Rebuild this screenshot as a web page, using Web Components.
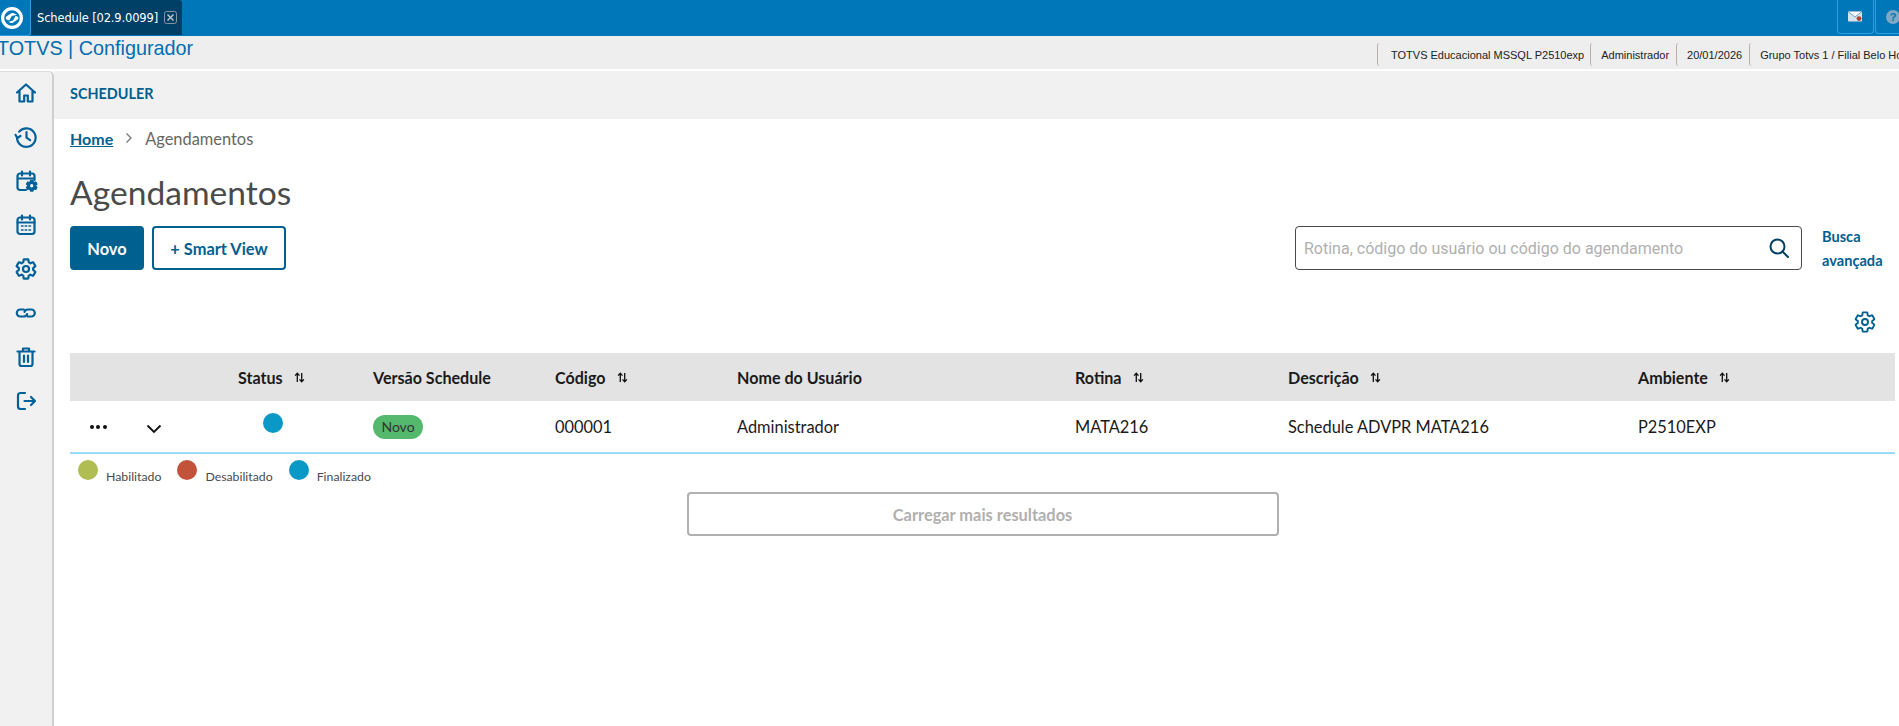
<!DOCTYPE html>
<html lang="pt-BR">
<head>
<meta charset="utf-8">
<title>Schedule</title>
<style>
  html, body { margin: 0; height: 100%; overflow: hidden; background: #fff; }
  body { display: flex; flex-direction: column; font-family: "Lato", "Liberation Sans", sans-serif; }
  .work { display: flex; flex: 1; min-height: 0; }
  .content { display: flex; flex-direction: column; flex: 1; min-width: 0; }
</style>
</head>
<body>
  <app-topbar></app-topbar>
  <app-infobar>
    <info-cell>TOTVS Educacional MSSQL P2510exp</info-cell>
    <info-cell>Administrador</info-cell>
    <info-cell>20/01/2026</info-cell>
    <info-cell>Grupo Totvs 1 / Filial Belo Ho</info-cell>
  </app-infobar>
  <div class="work">
    <app-sidebar></app-sidebar>
    <div class="content">
      <app-header>SCHEDULER</app-header>
      <bread-crumb></bread-crumb>
      <page-title>Agendamentos</page-title>
      <page-toolbar></page-toolbar>
      <data-table></data-table>
      <status-legend></status-legend>
      <load-more>Carregar mais resultados</load-more>
    </div>
  </div>

<script>
const GEAR = 'M19.14 12.94c.04-.3.06-.61.06-.94 0-.32-.02-.64-.07-.94l2.03-1.58c.18-.14.23-.41.12-.61l-1.92-3.32c-.12-.22-.37-.29-.59-.22l-2.39.96c-.5-.38-1.03-.7-1.62-.94l-.36-2.54c-.04-.24-.24-.41-.48-.41h-3.84c-.24 0-.43.17-.47.41l-.36 2.54c-.59.24-1.13.57-1.62.94l-2.39-.96c-.22-.08-.47 0-.59.22L2.74 8.87c-.12.21-.08.47.12.61l2.03 1.58c-.05.3-.09.63-.09.94s.02.64.07.94l-2.03 1.58c-.18.14-.23.41-.12.61l1.92 3.32c.12.22.37.29.59.22l2.39-.96c.5.38 1.03.7 1.62.94l.36 2.54c.05.24.24.41.48.41h3.84c.24 0 .44-.17.47-.41l.36-2.54c.59-.24 1.13-.56 1.62-.94l2.39.96c.22.08.47 0 .59-.22l1.92-3.32c.12-.22.07-.47-.12-.61l-2.01-1.58z';

class AppTopbar extends HTMLElement {
    connectedCallback() {
        this.attachShadow({ mode: "open" }).innerHTML = `
        <style>
            :host { display: flex; height: 36px; background: #0077b8; flex: none; overflow: hidden; }
            .logo { width: 30px; height: 35px; border-right: 1px solid #2f9de0; border-bottom: 1px solid #2f9de0; border-radius: 0 0 4px 0; display: flex; align-items: center; justify-content: flex-end; overflow: hidden; }
            .logo svg { flex: none; margin-right: 7px; }
            .tab { width: 151px; height: 35px; box-sizing: border-box; background: #003f66; border-radius: 0 3px 0 0; color: #fff; display: flex; align-items: center; padding-left: 6px; gap: 6px; font: 11.5px "DejaVu Sans", sans-serif; white-space: nowrap; }
            .tab b { font-weight: 400; letter-spacing: -.15px; }
            .spacer { flex: 1; }
            .btn { width: 37px; height: 34px; box-sizing: border-box; border: 1px solid #2f9de0; border-top: 0; border-radius: 0 0 4px 4px; display: flex; align-items: center; justify-content: center; flex: none; }
            .btn.help { width: 24px; justify-content: flex-start; padding-left: 10px; margin-left: 1px; border-right: 0; border-radius: 0 0 0 4px; overflow: hidden; }
            .btn.help svg { flex: none; }
        </style>
        <div class="logo">
            <svg width="22" height="22" viewBox="0 0 22 22">
                <circle cx="11" cy="11" r="9.4" fill="none" stroke="#fff" stroke-width="3.2"/>
                <path d="M5.4 9.4 9.8 6.5c.9-.6 1.9-.7 2.8-.3l3.4 1.5-5.2 1.2-2.6 4.7-2.7-1.2c-1-.6-1-2.2-.1-2.9z" fill="#fff"/>
                <path d="M16.6 12.6 12.2 15.5c-.9.6-1.9.7-2.8.3l-2-.9 4.6-1.5 2.6-4.7 2.1 1c1 .6 1 2.2-.1 2.9z" fill="#fff"/>
            </svg>
        </div>
        <div class="tab">
            <b>Schedule [02.9.0099]</b>
            <svg width="13" height="13" viewBox="0 0 13 13"><rect x=".5" y=".5" width="12" height="12" rx="2" fill="none" stroke="#8296a8"/><path d="M3.5 3.5l6 6M9.5 3.5l-6 6" stroke="#b8c4ce" stroke-width="1.5"/></svg>
        </div>
        <div class="spacer"></div>
        <div class="btn">
            <svg width="15" height="11" viewBox="0 0 15 11"><rect width="14" height="10" y=".5" rx="1" fill="#d5e5f0"/><path d="M.3.8 7 6 13.7.8" fill="#fff" stroke="#5d9cc6" stroke-width=".9"/><circle cx="11" cy="7.6" r="2.4" fill="#b5442b"/></svg>
        </div>
        <div class="btn help">
            <svg width="14" height="14" viewBox="0 0 14 14"><circle cx="7" cy="7" r="7" fill="#7fa9c4"/><text x="7" y="11" text-anchor="middle" font-family="Liberation Sans" font-size="11" font-weight="700" fill="#0077b8">?</text></svg>
        </div>`;
    }
}

class AppInfobar extends HTMLElement {
    connectedCallback() {
        this.attachShadow({ mode: "open" }).innerHTML = `
        <style>
            :host { display: flex; align-items: center; height: 33px; background: #eee; flex: none; overflow: hidden; margin-bottom: 2px; font-family: "Liberation Sans", Arial, sans-serif; white-space: nowrap; }
            .brand { font-size: 19.8px; color: #006eb0; margin-left: -3px; margin-top: -9px; flex: none; }
            .cells { margin-left: auto; display: flex; flex: none; width: 522px; }
        </style>
        <div class="brand">TOTVS | Configurador</div>
        <div class="cells"><slot></slot></div>`;
    }
}

class InfoCell extends HTMLElement {
    connectedCallback() {
        this.attachShadow({ mode: "open" }).innerHTML = `
        <style>
            :host { display: flex; align-items: center; flex: none; height: 23px; margin-top: 4px; box-sizing: border-box; padding: 0 7px 0 10px; border-left: 1px solid #b9aeaa; border-radius: 3px 0 0 3px; font-size: 11px; color: #222; }
            :host(:first-child) { padding: 0 6px 0 13px; }
        </style>
        <slot></slot>`;
    }
}

class AppSidebar extends HTMLElement {
    connectedCallback() {
        const icons = [
            '<path d="M3 11.5 12 3.5l9 8M5.5 10v10.5h4.7v-6h3.6v6h4.7V10"/>',
            '<path d="M5.2 6.6A9.3 9.3 0 1 1 3 12.6"/><path d="M1.5 9.8 3.3 13l3.2-2"/><path d="M12.5 7v5.7l3.6 2.4"/>',
            '<path d="M12 21H6a2.5 2.5 0 0 1-2.5-2.5V7A2.5 2.5 0 0 1 6 4.5h12A2.5 2.5 0 0 1 20.5 7v4M3.5 9.5h17M8 2.5v4M16 2.5v4"/><g transform="translate(11 10) scale(.56)"><path d="' + GEAR + '" fill="currentColor"/><circle cx="12" cy="12" r="3" fill="#f1f1f1" stroke="none"/></g>',
            '<rect x="3.5" y="4.5" width="17" height="16.5" rx="2.5"/><path d="M3.5 9.5h17M8 2.5v4M16 2.5v4"/><path d="M7.5 13h1.5M11.2 13h1.5M15 13h1.5M7.5 17h1.5M11.2 17h1.5M15 17h1.5" stroke-width="1.6"/>',
            '<path d="' + GEAR + '"/><circle cx="12" cy="12" r="3"/>',
            '<path d="M10 8.5H6.5a3.5 3.5 0 0 0 0 7H10a3.5 3.5 0 0 0 3.3-2.4M14 15.5h3.5a3.5 3.5 0 0 0 0-7H14a3.5 3.5 0 0 0-3.3 2.4" transform="translate(-.2 0)"/>',
            '<path d="M3.5 6.5h17M9 6V3.5h6V6M5.5 6.5V19A2 2 0 0 0 7.5 21h9a2 2 0 0 0 2-2V6.5M10 10.5v6.5M14 10.5v6.5"/>',
            '<path d="M11 4H6.5A2.5 2.5 0 0 0 4 6.5v11A2.5 2.5 0 0 0 6.5 20H11M10.5 12H21M17 8l4 4-4 4"/>'
        ];
        this.attachShadow({ mode: "open" }).innerHTML = `
        <style>
            :host { display: flex; flex-direction: column; align-items: center; width: 54px; box-sizing: border-box; background: #f1f1f1; border-right: 2px solid #cfcfcf; border-top: 1px solid #ddd; border-radius: 0 5px 0 0; flex: none; }
            .item { height: 44px; display: flex; align-items: center; justify-content: center; color: #00609a; position: relative; top: -1px; }
            svg { width: 24px; height: 24px; fill: none; stroke: currentColor; stroke-width: 2.2; stroke-linecap: round; stroke-linejoin: round; }
        </style>
        ${icons.map(i => `<div class="item"><svg viewBox="0 0 24 24">${i}</svg></div>`).join('')}`;
    }
}

class AppHeader extends HTMLElement {
    connectedCallback() {
        this.attachShadow({ mode: "open" }).innerHTML = `
        <style>
            :host { display: flex; align-items: center; height: 48px; box-sizing: border-box; background: #f1f1f1; padding: 0 0 4px 16px; flex: none; color: #005f8f; font-size: 14.4px; font-weight: 700; }
        </style>
        <slot></slot>`;
    }
}

class BreadCrumb extends HTMLElement {
    connectedCallback() {
        this.attachShadow({ mode: "open" }).innerHTML = `
        <style>
            :host { display: flex; align-items: center; height: 38px; padding-left: 16px; flex: none; font-size: 16.4px; color: #666; }
            a { color: #00618f; font-weight: 700; text-decoration: underline; font-size: 16px; }
            svg { margin: 0 12px 0 12px; }
        </style>
        <a>Home</a>
        <svg width="8" height="12" viewBox="0 0 8 12"><path d="M1.5 1.5 6 6l-4.5 4.5" fill="none" stroke="#777" stroke-width="1.3"/></svg>
        <span>Agendamentos</span>`;
    }
}

class PageTitle extends HTMLElement {
    connectedCallback() {
        this.attachShadow({ mode: "open" }).innerHTML = `
        <style>
            :host { display: block; height: 69px; box-sizing: border-box; padding: 13px 0 0 16px; flex: none; font-size: 33.6px; line-height: 44px; color: #4a4a4a; }
        </style>
        <slot></slot>`;
    }
}

class PageToolbar extends HTMLElement {
    connectedCallback() {
        this.attachShadow({ mode: "open" }).innerHTML = `
        <style>
            :host { display: flex; align-items: flex-start; height: 84px; padding-left: 16px; flex: none; }
            button { height: 44px; box-sizing: border-box; border: 2px solid #00608f; border-radius: 4px; font: 700 16.4px "Lato", sans-serif; }
            .primary { width: 74px; background: #00608f; color: #fff; margin-right: 8px; }
            .ghost { width: 134px; background: #fff; color: #00608f; }
            .search { margin-left: auto; flex: none; width: 507px; height: 44px; box-sizing: border-box; border: 1px solid #4a4a4a; border-radius: 4px; display: flex; align-items: center; padding: 0 11px 0 8px; font: 16px "Roboto", sans-serif; color: #b0b0b0; white-space: nowrap; }
            .search span { flex: 1; }
            .more { flex: none; width: 97px; box-sizing: border-box; padding-left: 20px; margin-top: -1px; font: 700 14.6px/24px "Lato", sans-serif; color: #00608f; }
            .more div { height: 24px; }
        </style>
        <button class="primary">Novo</button>
        <button class="ghost">+ Smart View</button>
        <div class="search">
            <span>Rotina, código do usuário ou código do agendamento</span>
            <svg width="22" height="22" viewBox="0 0 22 22"><circle cx="9.5" cy="9.5" r="7" fill="none" stroke="#003f66" stroke-width="2"/><path d="M14.5 14.5 20 20" stroke="#003f66" stroke-width="2" stroke-linecap="round"/></svg>
        </div>
        <div class="more"><div>Busca</div><div>avançada</div></div>`;
    }
}

class DataTable extends HTMLElement {
    connectedCallback() {
        const sort = `<svg class="sort" width="11" height="11" viewBox="0 0 10 10"><path d="M3 9V1.5M1 3.3 3 1.2l2 2.1M7 1v7.5M5 6.7l2 2.1 2-2.1" fill="none" stroke="#111" stroke-width="1.2"/></svg>`;
        const heads = [['', 0], ['', 0], ['Status', 1], ['Versão Schedule', 0], ['Código', 1], ['Nome do Usuário', 0], ['Rotina', 1], ['Descrição', 1], ['Ambiente', 1]];
        this.attachShadow({ mode: "open" }).innerHTML = `
        <style>
            :host { display: block; margin: 0 4px 0 16px; flex: none; color: #1a1a1a; }
            .gear { display: flex; justify-content: flex-end; height: 43px; padding-right: 18px; color: #00608f; }
            .gear svg { width: 24px; height: 24px; fill: none; stroke: currentColor; stroke-width: 1.9; }
            .row { display: grid; grid-template-columns: 56px 112px 135px 182px 182px 338px 213px 350px 1fr; align-items: center; }
            .head { height: 48px; background: #e3e3e3; font-size: 16.1px; font-weight: 700; }
            .head div { display: flex; align-items: center; gap: 11px; }
            .body { height: 51px; border-bottom: 2px solid #9bdcfd; font-size: 16.4px; }
            .dots { padding-left: 20px; display: flex; gap: 2.4px; }
            .dots i { width: 4px; height: 4px; border-radius: 50%; background: #111; display: block; }
            .chev { padding-left: 20px; padding-top: 1px; }
            .status i { display: block; width: 20px; height: 20px; border-radius: 50%; background: #0a99c6; margin: -7px 0 0 25px; }
            .tag { display: inline-block; background: #54b86d; color: #333; border-radius: 12px; width: 50px; height: 24px; line-height: 24px; text-align: center; font-size: 14px; box-sizing: border-box; }
        </style>
        <div class="gear"><svg viewBox="0 0 24 24"><path d="${GEAR}"/><circle cx="12" cy="12" r="3"/></svg></div>
        <div class="row head">
            ${heads.map(h => `<div>${h[0]}${h[1] ? sort : ''}</div>`).join('')}
        </div>
        <div class="row body">
            <div class="dots"><i></i><i></i><i></i></div>
            <div class="chev"><svg width="16" height="10" viewBox="0 0 16 10"><path d="M1.5 1.5 8 8l6.5-6.5" fill="none" stroke="#111" stroke-width="1.8"/></svg></div>
            <div class="status"><i></i></div>
            <div><span class="tag">Novo</span></div>
            <div>000001</div>
            <div>Administrador</div>
            <div>MATA216</div>
            <div>Schedule ADVPR MATA216</div>
            <div>P2510EXP</div>
        </div>`;
    }
}

class StatusLegend extends HTMLElement {
    connectedCallback() {
        const items = [['#afbd52', 'Habilitado'], ['#c2533a', 'Desabilitado'], ['#0a99c6', 'Finalizado']];
        this.attachShadow({ mode: "open" }).innerHTML = `
        <style>
            :host { display: flex; height: 38px; padding: 6px 0 0 24px; box-sizing: border-box; gap: 16px; flex: none; font-size: 12.3px; color: #4a4a4a; }
            .item { display: flex; align-items: flex-start; gap: 8px; }
            i { width: 20px; height: 20px; border-radius: 50%; display: block; flex: none; }
            span { padding-top: 10px; line-height: 14px; }
        </style>
        ${items.map(i => `<div class="item"><i style="background:${i[0]}"></i><span>${i[1]}</span></div>`).join('')}`;
    }
}

class LoadMore extends HTMLElement {
    connectedCallback() {
        this.attachShadow({ mode: "open" }).innerHTML = `
        <style>
            :host { display: flex; justify-content: center; flex: none; padding-left: 12px; }
            button { width: 592px; height: 44px; background: #fff; border: 2px solid #b0b0b0; border-radius: 4px; font: 700 16.4px "Lato", sans-serif; color: #b0b0b0; }
        </style>
        <button><slot></slot></button>`;
    }
}

customElements.define('app-topbar', AppTopbar);
customElements.define('app-infobar', AppInfobar);
customElements.define('info-cell', InfoCell);
customElements.define('app-sidebar', AppSidebar);
customElements.define('app-header', AppHeader);
customElements.define('bread-crumb', BreadCrumb);
customElements.define('page-title', PageTitle);
customElements.define('page-toolbar', PageToolbar);
customElements.define('data-table', DataTable);
customElements.define('status-legend', StatusLegend);
customElements.define('load-more', LoadMore);
</script>
</body>
</html>
